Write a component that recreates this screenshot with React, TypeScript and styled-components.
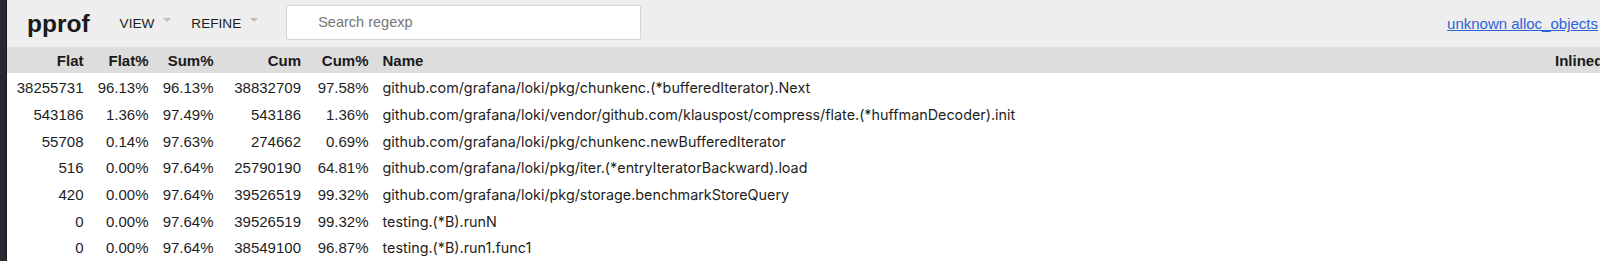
import React from 'react';
import styled, { createGlobalStyle } from 'styled-components';

const GlobalStyle = createGlobalStyle`
	html, body {
		margin: 0;
		padding: 0;
		background: #ffffff;
		overflow: hidden;
	}
	body {
		font-family: "Liberation Sans", Arial, Helvetica, sans-serif;
		color: #1e1e1e;
	}
`;

type Row = {
	flat: string;
	flatPct: string;
	sumPct: string;
	cum: string;
	cumPct: string;
	name: string;
};

const rows: Row[] = [
	{ flat: '38255731', flatPct: '96.13%', sumPct: '96.13%', cum: '38832709', cumPct: '97.58%', name: 'github.com/grafana/loki/pkg/chunkenc.(*bufferedIterator).Next' },
	{ flat: '543186', flatPct: '1.36%', sumPct: '97.49%', cum: '543186', cumPct: '1.36%', name: 'github.com/grafana/loki/vendor/github.com/klauspost/compress/flate.(*huffmanDecoder).init' },
	{ flat: '55708', flatPct: '0.14%', sumPct: '97.63%', cum: '274662', cumPct: '0.69%', name: 'github.com/grafana/loki/pkg/chunkenc.newBufferedIterator' },
	{ flat: '516', flatPct: '0.00%', sumPct: '97.64%', cum: '25790190', cumPct: '64.81%', name: 'github.com/grafana/loki/pkg/iter.(*entryIteratorBackward).load' },
	{ flat: '420', flatPct: '0.00%', sumPct: '97.64%', cum: '39526519', cumPct: '99.32%', name: 'github.com/grafana/loki/pkg/storage.benchmarkStoreQuery' },
	{ flat: '0', flatPct: '0.00%', sumPct: '97.64%', cum: '39526519', cumPct: '99.32%', name: 'testing.(*B).runN' },
	{ flat: '0', flatPct: '0.00%', sumPct: '97.64%', cum: '38549100', cumPct: '96.87%', name: 'testing.(*B).run1.func1' },
];

const App = () => {
	return (
		<Page>
			<GlobalStyle />
			<Strip />
			<Main>
				<Header>
					<Title>pprof</Title>
					<Menus>
						<Menu>
							VIEW
							<Caret />
						</Menu>
						<Menu>
							REFINE
							<Caret />
						</Menu>
					</Menus>
					<Search placeholder="Search regexp" />
					<Spacer />
					<SampleLink href="#">unknown alloc_objects</SampleLink>
				</Header>
				<Table>
					<HeadRow>
						<Cell $align="right">Flat</Cell>
						<Cell $align="right">Flat%</Cell>
						<Cell $align="right">Sum%</Cell>
						<Cell $align="right">Cum</Cell>
						<Cell $align="right">Cum%</Cell>
						<Cell>Name</Cell>
						<Cell>Inlined?</Cell>
					</HeadRow>
					{rows.map((r, i) => (
						<BodyRow key={i}>
							<Cell $align="right">{r.flat}</Cell>
							<Cell $align="right">{r.flatPct}</Cell>
							<Cell $align="right">{r.sumPct}</Cell>
							<Cell $align="right">{r.cum}</Cell>
							<Cell $align="right">{r.cumPct}</Cell>
							<NameCell>{r.name}</NameCell>
							<Cell />
						</BodyRow>
					))}
				</Table>
			</Main>
		</Page>
	);
};

const Page = styled.div`
	display: flex;
	width: 1600px;
	height: 261px;
	overflow: hidden;
`;

const Strip = styled.div`
	flex: 0 0 7px;
	background: #262a30;
	border-right: 1px solid #16181b;
	box-sizing: border-box;
`;

const Main = styled.div`
	flex: 1;
	min-width: 0;
	overflow: hidden;
`;

const Header = styled.div`
	display: flex;
	align-items: center;
	height: 46.67px;
	background: #eeeeee;
	padding: 0 2px 0 20px;
	box-sizing: border-box;
`;

const Title = styled.div`
	font-size: 24.5px;
	font-weight: bold;
	color: #1a1a1a;
	margin-top: 1px;
`;

const Menus = styled.div`
	display: flex;
	align-items: center;
	gap: 20px;
	margin-left: 30px;
`;

const Menu = styled.div`
	display: flex;
	align-items: center;
	gap: 9px;
	font-size: 13.6px;
	color: #1e1e1e;
`;

const Caret = styled.span`
	width: 0;
	height: 0;
	border-left: 4px solid transparent;
	border-right: 4px solid transparent;
	border-top: 4px solid #bdbdbd;
	transform: translateY(-3px);
`;

const Search = styled.input`
	margin-left: 28px;
	width: 355px;
	height: 35px;
	margin-bottom: 2px;
	box-sizing: border-box;
	border: 1px solid #d4d4d4;
	border-radius: 2px;
	background: #ffffff;
	padding: 0 0 0 31px;
	font-family: "Liberation Sans", Arial, sans-serif;
	font-size: 14.5px;
	outline: none;
	&::placeholder {
		color: #767676;
	}
`;

const Spacer = styled.div`
	flex: 1;
`;

const SampleLink = styled.a`
	font-size: 15px;
	color: #2e63d8;
	text-decoration: underline;
	margin-top: 1px;
`;

const Table = styled.div`
	width: 1606px;
`;

const HeadRow = styled.div`
	display: grid;
	grid-template-columns: 83.5px 65px 65px 87.5px 67.5px 1fr 65px;
	height: 26.67px;
	background: #dddddd;
	font-weight: bold;
	font-size: 15px;
	color: #1a1a1a;
	padding-top: 3px;
	box-sizing: border-box;
`;

const BodyRow = styled.div`
	display: grid;
	grid-template-columns: 83.5px 65px 65px 87.5px 67.5px 1fr 65px;
	height: 26.67px;
	font-size: 15px;
	padding-top: 4px;
	box-sizing: border-box;
`;

const Cell = styled.div<{ $align?: 'left' | 'right' }>`
	padding: 0 7px;
	text-align: ${(p) => p.$align || 'left'};
	white-space: nowrap;
	overflow: hidden;
	line-height: 22px;
`;

const NameCell = styled(Cell)`
	font-family: Inter, "Liberation Sans", Arial, sans-serif;
	font-size: 14.35px;
`;

export default App;
